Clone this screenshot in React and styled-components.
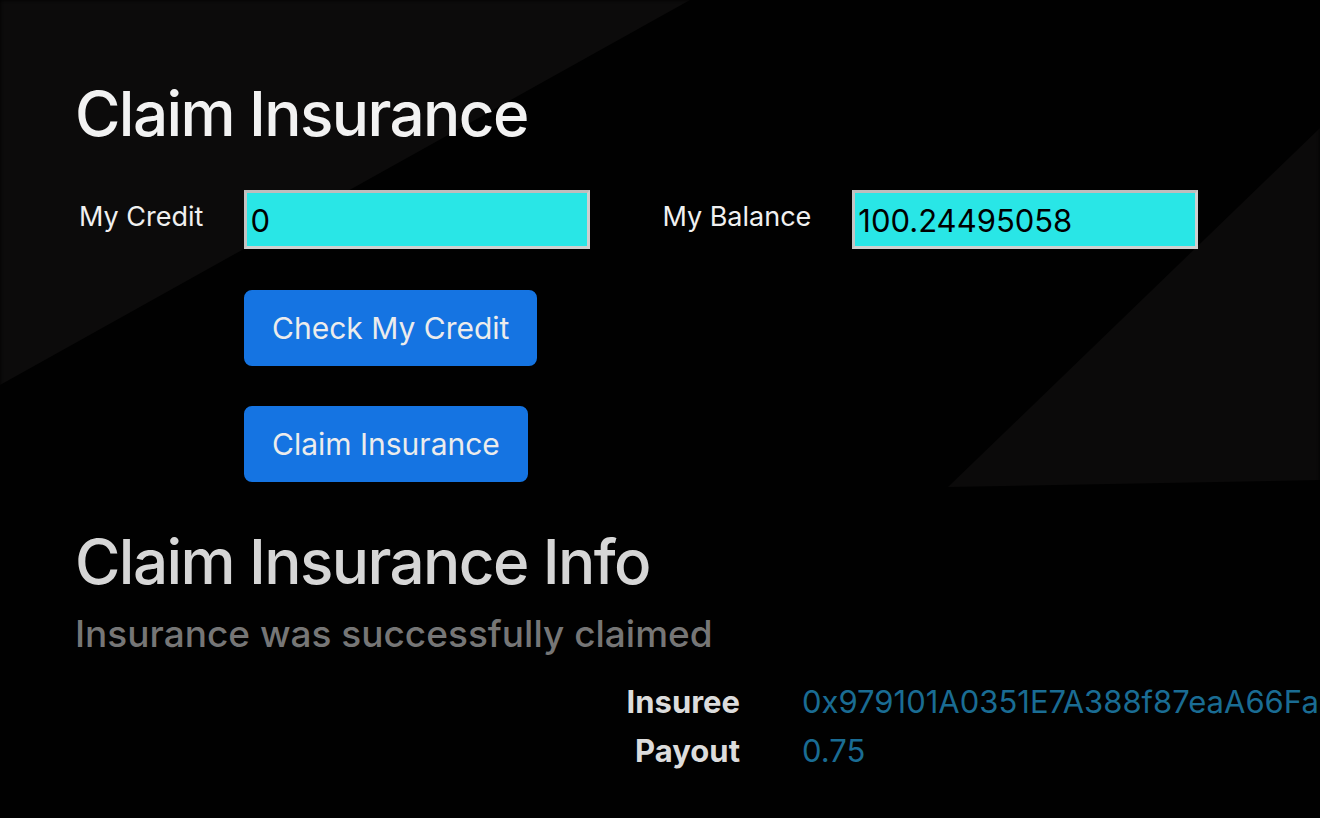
import React from "react";
import styled, { createGlobalStyle } from "styled-components";

const GlobalStyle = createGlobalStyle`
  html, body {
    margin: 0;
    padding: 0;
    background: #000;
  }
  body {
    font-family: Inter, "Noto Sans", "Liberation Sans", sans-serif;
    color: #f0f0f0;
  }
  * { box-sizing: border-box; }
`;

const Screen = styled.div`
  position: relative;
  width: 1320px;
  height: 818px;
  overflow: hidden;
  background: #010101;
`;

const Backdrop = styled.div`
  position: absolute;
  inset: 0;
  pointer-events: none;
`;

const Shard = styled.div`
  position: absolute;
  inset: 0;
  background: ${(p) => p.$color};
  clip-path: ${(p) => p.$shape};
  filter: blur(2px);
`;

const Container = styled.main`
  position: relative;
  padding: 76px 0 0 75px;
  display: flex;
  flex-direction: column;
  align-items: flex-start;
`;

const Title = styled.h1`
  margin: ${(p) => p.$top || 0}px 0 0;
  font-size: 62px;
  font-weight: 500;
  line-height: 76px;
  letter-spacing: -1.6px;
  color: ${(p) => p.$color || "#f2f2f2"};
`;

const FieldRow = styled.div`
  display: flex;
  align-items: center;
  margin-top: 38px;
  margin-left: 4px;
`;

const FieldLabel = styled.label`
  font-size: 27px;
  font-weight: 400;
  color: #f0f0f0;
  margin-right: 41px;
  margin-top: -6px;
`;

const ValueInput = styled.input`
  width: 346px;
  height: 59px;
  padding: 2px 4px 0 3px;
  background: #29e6e6;
  border: 3px solid #cfcfcf;
  border-top-color: #bdbdbd;
  border-left-color: #c4c4c4;
  font-family: Inter, "Liberation Sans", sans-serif;
  font-size: 31px;
  color: #000;
  outline: none;
  margin-right: ${(p) => p.$gap || 0}px;
`;

const Actions = styled.div`
  display: flex;
  flex-direction: column;
  align-items: flex-start;
  gap: 40px;
  margin-top: 41px;
  margin-left: 169px;
`;

const PrimaryButton = styled.button`
  height: 76px;
  padding: 0 26px;
  border: 2px solid #1574e2;
  border-radius: 8px;
  background: #1574e2;
  color: #ececec;
  font-family: Inter, "Liberation Sans", sans-serif;
  font-size: 30px;
  font-weight: 400;
  line-height: 48px;
  cursor: pointer;
`;

const Subtitle = styled.h5`
  margin: 10px 0 0;
  font-size: 37px;
  font-weight: 500;
  line-height: 48px;
  letter-spacing: 0;
  color: #767676;
`;

const InfoTable = styled.dl`
  display: grid;
  grid-template-columns: 665px auto;
  column-gap: 62px;
  row-gap: 6px;
  margin: 22px 0 0;
  font-size: 31px;
  line-height: 43px;
  white-space: nowrap;
`;

const InfoKey = styled.dt`
  text-align: right;
  font-weight: 700;
  color: #dcdcdc;
`;

const InfoValue = styled.dd`
  margin: 0;
  color: #1a6c93;
`;

export default function App() {
  return (
    <>
      <GlobalStyle />
      <Screen>
        <Backdrop>
          <Shard $color="#0c0b0b" $shape="polygon(0 0, 690px 0, 0 385px)" />
          <Shard $color="#0b0a0a" $shape="polygon(1320px 128px, 1320px 480px, 948px 487px)" />
        </Backdrop>
        <Container>
          <Title>Claim Insurance</Title>
          <FieldRow>
            <FieldLabel>My Credit</FieldLabel>
            <ValueInput readOnly value="0" $gap={72} />
            <FieldLabel>My Balance</FieldLabel>
            <ValueInput readOnly value="100.24495058" />
          </FieldRow>
          <Actions>
            <PrimaryButton>Check My Credit</PrimaryButton>
            <PrimaryButton>Claim Insurance</PrimaryButton>
          </Actions>
          <Title $color="#d6d6d6" $top={42}>Claim Insurance Info</Title>
          <Subtitle>Insurance was successfully claimed</Subtitle>
          <InfoTable>
            <InfoKey>Insuree</InfoKey>
            <InfoValue>0x979101A0351E7A388f87eaA66Fa</InfoValue>
            <InfoKey>Payout</InfoKey>
            <InfoValue>0.75</InfoValue>
          </InfoTable>
        </Container>
      </Screen>
    </>
  );
}
